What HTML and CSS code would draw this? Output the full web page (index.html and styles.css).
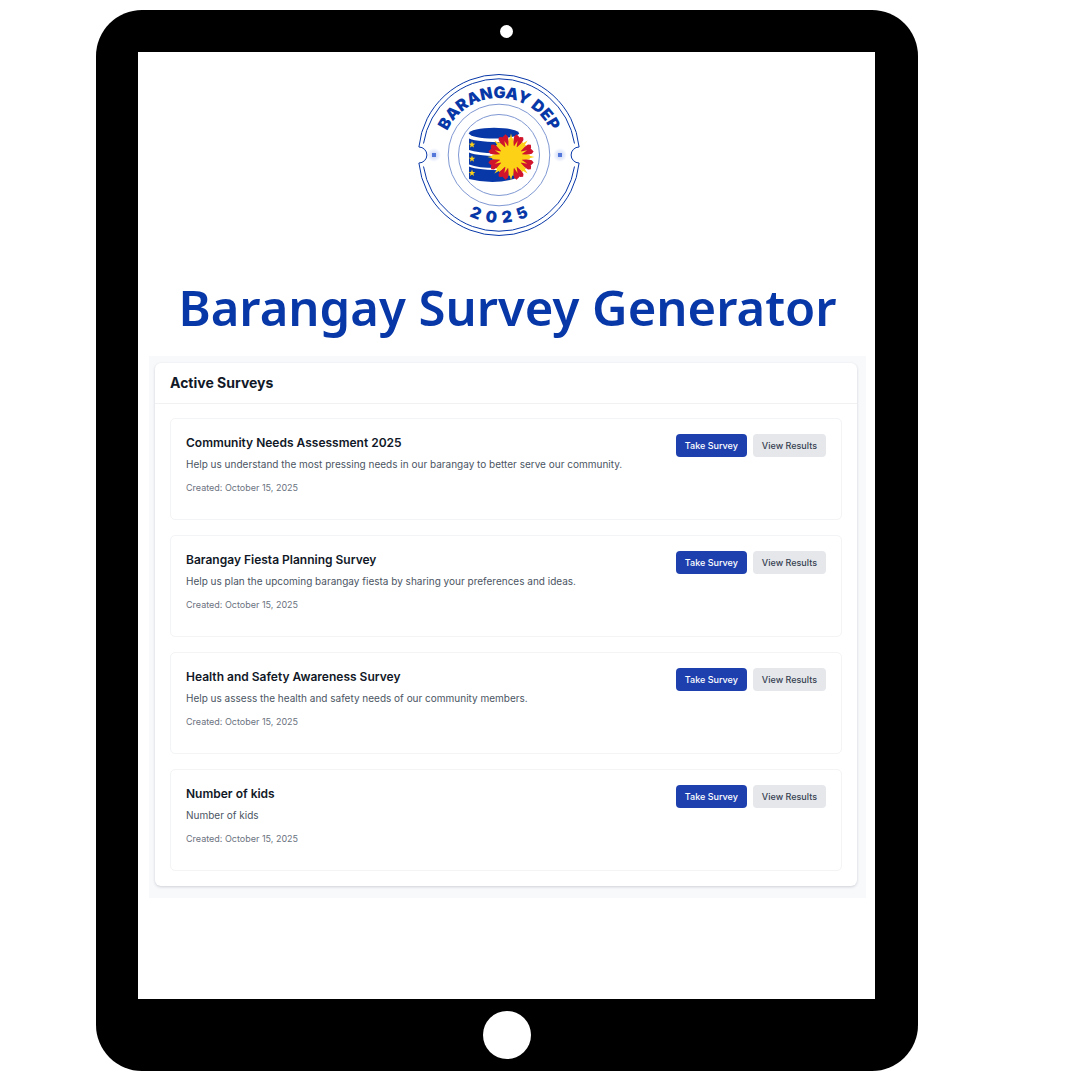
FILE: index.html
```html
<!DOCTYPE html>
<html lang="en">
<head>
<meta charset="utf-8">
<meta name="viewport" content="width=device-width, initial-scale=1">
<title>Barangay Survey Generator</title>
<link rel="stylesheet" href="styles.css">
</head>
<body>
<div class="tablet">
  <div class="bezel-top"><span class="camera"></span></div>
  <main class="screen">
    <svg class="logo" viewBox="-81 -81 162 162" role="img" aria-label="Barangay DEP 2025">
      <defs>
        <path id="arc-top" d="M-57 0A57 57 0 0 1 57 0"/>
        <path id="arc-bottom" d="M-68 0A68 68 0 0 0 68 0"/>
        <radialGradient id="glow"><stop offset="0" stop-color="#6f8fe8" stop-opacity=".4"/><stop offset="1" stop-color="#6f8fe8" stop-opacity="0"/></radialGradient>
        <path id="star" d="M0-3.4L.9-1.1 3.3-1 1.4.5 2 2.9 0 1.5-2 2.9-1.4.5-3.3-1-.9-1.1z"/>
        <g id="ray">
          <path fill="#d0142c" d="M-3-10L-5-20.5-3.6-23-.6-22 0-21.2.6-22 3.6-23 5-20.5 3-10z"/>
          <path fill="#fcd116" d="M-1.6-10L0-17.5 1.6-10z"/>
        </g>
        <path id="beam" fill="#fcd116" d="M-2.8-10L-2.3-19-1.2-18.5 0-23.5 1.2-18.5 2.3-19 2.8-10z"/>
      </defs>
      <g class="rings">
        <path d="M-80.1-8A80.5 80.5 0 0 1 80.1-8A8 8 0 0 0 80.1 8A80.5 80.5 0 0 1-80.1 8A8 8 0 0 0-80.1-8z"/>
        <path d="M-75.5-11.5A76.4 76.4 0 0 1 75.5-11.5M-75.5 11.5A76.4 76.4 0 0 0 75.5 11.5"/>
        <circle class="thin" r="50.8"/>
        <circle class="thin" r="40.5"/>
      </g>
      <g class="seal-text">
        <text><textPath href="#arc-top" startOffset="50%">BARANGAY DEP</textPath></text>
        <text><textPath href="#arc-bottom" startOffset="50%">2&nbsp;&nbsp;0&nbsp;&nbsp;2&nbsp;&nbsp;5</textPath></text>
      </g>
      <circle cx="-65" r="7" fill="url(#glow)"/><circle cx="61" r="7" fill="url(#glow)"/>
      <path fill="#5478da" d="M-67-2h4v4h-4zM59-2h4v4h-4z"/>
      <g fill="#0838a8">
        <ellipse cx="-5" cy="-21.8" rx="25" ry="5.4"/>
        <path d="M-30-16.5Q-18-11.8 20-13V-3Q-16 0-30-5z"/>
        <path d="M-30-2.5Q-18 2.2 20 1V12Q-16 15-30 9.5z"/>
        <path d="M-30 11.5Q-18 16.2 20 15V22Q-2 31-30 24z"/>
      </g>
      <g fill="#fcd116">
        <use href="#star" x="-27" y="-10.3"/><use href="#star" x="-27" y="3.8"/><use href="#star" x="-27" y="18"/>
      </g>
      <g transform="translate(12 2)">
        <use href="#ray" transform="rotate(22.5)"/><use href="#ray" transform="rotate(67.5)"/><use href="#ray" transform="rotate(112.5)"/><use href="#ray" transform="rotate(157.5)"/><use href="#ray" transform="rotate(202.5)"/><use href="#ray" transform="rotate(247.5)"/><use href="#ray" transform="rotate(292.5)"/><use href="#ray" transform="rotate(337.5)"/>
        <use href="#beam"/><use href="#beam" transform="rotate(45)"/><use href="#beam" transform="rotate(90)"/><use href="#beam" transform="rotate(135)"/><use href="#beam" transform="rotate(180)"/><use href="#beam" transform="rotate(225)"/><use href="#beam" transform="rotate(270)"/><use href="#beam" transform="rotate(315)"/>
        <circle r="11.5" fill="#fcd116"/>
      </g>
    </svg>
    <h1 class="title">Barangay Survey Generator</h1>
    <div class="panel">
      <section class="card">
        <h2 class="card-title">Active Surveys</h2>
        <div class="surveys">
          <article class="survey">
            <div class="info">
              <h3 class="name">Community Needs Assessment 2025</h3>
              <p class="desc">Help us understand the most pressing needs in our barangay to better serve our community.</p>
              <p class="date">Created: October 15, 2025</p>
            </div>
            <div class="actions"><button class="btn primary" type="button">Take Survey</button><button class="btn" type="button">View Results</button></div>
          </article>
          <article class="survey">
            <div class="info">
              <h3 class="name">Barangay Fiesta Planning Survey</h3>
              <p class="desc">Help us plan the upcoming barangay fiesta by sharing your preferences and ideas.</p>
              <p class="date">Created: October 15, 2025</p>
            </div>
            <div class="actions"><button class="btn primary" type="button">Take Survey</button><button class="btn" type="button">View Results</button></div>
          </article>
          <article class="survey">
            <div class="info">
              <h3 class="name">Health and Safety Awareness Survey</h3>
              <p class="desc">Help us assess the health and safety needs of our community members.</p>
              <p class="date">Created: October 15, 2025</p>
            </div>
            <div class="actions"><button class="btn primary" type="button">Take Survey</button><button class="btn" type="button">View Results</button></div>
          </article>
          <article class="survey">
            <div class="info">
              <h3 class="name">Number of kids</h3>
              <p class="desc">Number of kids</p>
              <p class="date">Created: October 15, 2025</p>
            </div>
            <div class="actions"><button class="btn primary" type="button">Take Survey</button><button class="btn" type="button">View Results</button></div>
          </article>
        </div>
      </section>
    </div>
  </main>
  <div class="bezel-bottom"><span class="home"></span></div>
</div>
</body>
</html>
```
FILE: styles.css
```css
* { box-sizing: border-box; }
body {
  margin: 0;
  min-height: 100vh;
  padding: 10px 162px 9px 96px;
  display: flex;
  background: #fff;
  font-family: Inter, "Liberation Sans", sans-serif;
}
h1, h2, h3, p { margin: 0; }

.tablet {
  flex: 1;
  min-width: 0;
  display: flex;
  flex-direction: column;
  padding: 0 43px 0 42px;
  border-radius: 46px;
  background: #000;
}
.bezel-top, .bezel-bottom {
  display: flex;
  align-items: center;
  justify-content: center;
}
.bezel-top { height: 42px; }
.bezel-bottom { height: 72px; }
.camera, .home { border-radius: 50%; background: #fff; }
.camera { width: 13px; height: 13px; }
.home { width: 48px; height: 48px; }

.screen {
  flex: 1;
  display: flex;
  flex-direction: column;
  padding: 22px 9px 22px 11px;
  background: #fff;
}

.logo {
  width: 162px;
  height: 162px;
  margin-right: 18px;
  align-self: center;
  overflow: visible;
}
.rings { fill: none; stroke: #0838a8; stroke-width: 1; }
.thin { stroke: #7f98d2; }
.seal-text {
  fill: #0838a8;
  font-size: 16px;
  font-weight: 900;
  text-anchor: middle;
}

.title {
  margin-top: 36px;
  color: #0838a8;
  font: 600 49px/70px "Noto Sans", sans-serif;
  text-align: center;
}

.panel {
  margin-top: 14px;
  padding: 7px 9px 12px 6px;
  background: #f8f9fb;
}
.card {
  border-radius: 6px;
  background: #fff;
  box-shadow: 0 1px 3px rgba(15, 23, 42, .18);
}
.card-title {
  padding: 0 15px;
  border-bottom: 1px solid #f0f1f3;
  color: #111827;
  font-size: 14px;
  font-weight: 700;
  line-height: 40px;
}
.surveys {
  display: flex;
  flex-direction: column;
  gap: 15px;
  padding: 14px 15px 15px;
}
.survey {
  display: flex;
  justify-content: space-between;
  gap: 15px;
  min-height: 102px;
  padding: 15px;
  border: 1px solid #f3f4f6;
  border-radius: 5px;
}
.name { color: #111827; font-size: 12px; font-weight: 600; line-height: 18px; }
.desc { margin-top: 4px; color: #4b5563; font-size: 10px; line-height: 16px; }
.date { margin-top: 9px; color: #6b7280; font-size: 9px; line-height: 14px; }

.actions { display: flex; align-items: flex-start; gap: 6px; }
.btn {
  height: 23px;
  padding: 0 9px;
  border: 0;
  border-radius: 4px;
  background: #e5e7eb;
  color: #374151;
  font: 500 9px/23px Inter, "Liberation Sans", sans-serif;
  white-space: nowrap;
}
.primary { background: #1e40af; color: #fff; }
```
